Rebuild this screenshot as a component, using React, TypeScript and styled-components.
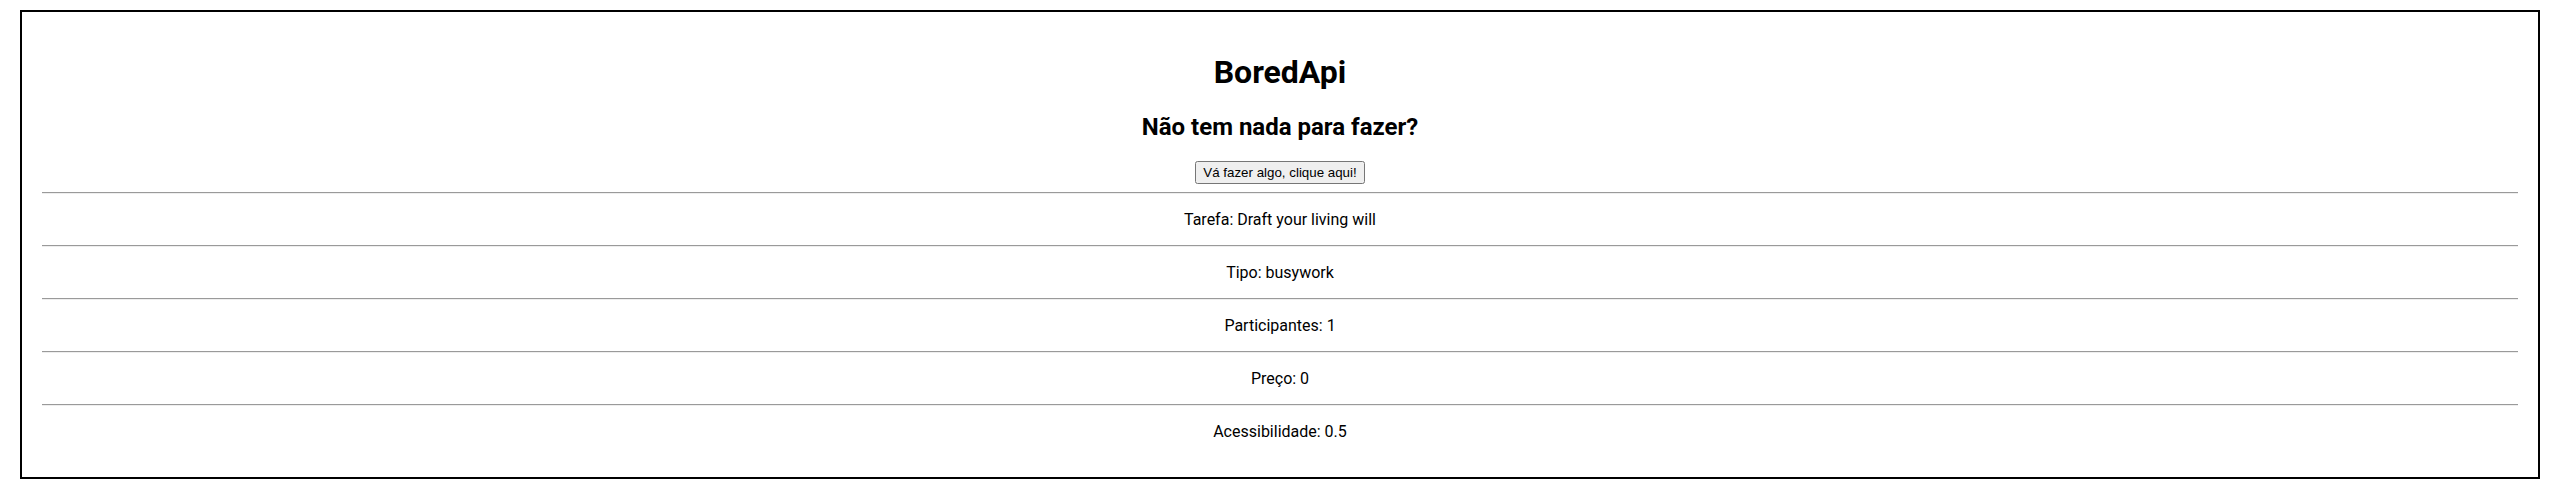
import styled, { createGlobalStyle } from "styled-components";

const GlobalStyle = createGlobalStyle`
  body {
    margin: 0;
    background: #fff;
    font-family: Roboto, "Liberation Sans", sans-serif;
    color: #000;
  }
`;

const Container = styled.div`
  margin: 10px 14px 10px 20px;
  border: 2px solid black;
  padding: 20px;
  text-align: center;
`;

const Title = styled.h1`
  font-size: 2em;
  margin: 0.67em 0;
`;

const Subtitle = styled.h2`
  font-size: 1.5em;
  margin: 0.83em 0;
`;

const FetchButton = styled.button`
  font-family: "Liberation Sans", Arial, sans-serif;
  font-size: 13.333px;
  padding: 2px 6px;
`;

const Divider = styled.hr`
  margin: 8px 0;
  border: none;
  border-top: 1px solid #9a9a9a;
  border-bottom: 1px solid #eeeeee;
  height: 0;
`;

const Info = styled.p`
  font-size: 16px;
  margin: 16px 0;
`;

const activity = {
  activity: "Draft your living will",
  type: "busywork",
  participants: 1,
  price: 0,
  accessibility: 0.5,
};

const App = () => {
  const rows = [
    `Tarefa: ${activity.activity}`,
    `Tipo: ${activity.type}`,
    `Participantes: ${activity.participants}`,
    `Preço: ${activity.price}`,
    `Acessibilidade: ${activity.accessibility}`,
  ];
  return (
    <>
      <GlobalStyle />
      <Container>
        <Title>BoredApi</Title>
        <Subtitle>Não tem nada para fazer?</Subtitle>
        <FetchButton>Vá fazer algo, clique aqui!</FetchButton>
        {rows.map((row) => (
          <div key={row}>
            <Divider />
            <Info>{row}</Info>
          </div>
        ))}
      </Container>
    </>
  );
};

export default App;
